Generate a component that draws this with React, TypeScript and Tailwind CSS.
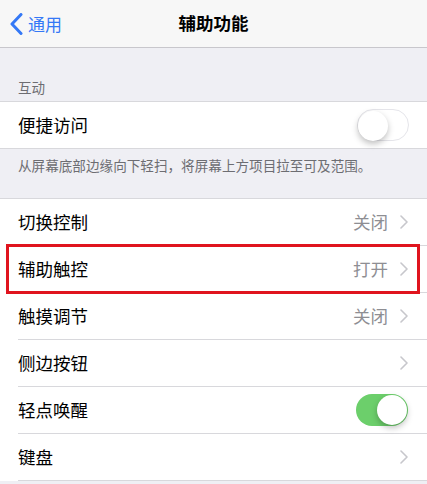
import React from "react";

const font = { fontFamily: '"Noto Sans CJK SC", "Noto Sans", sans-serif' };

function Chevron() {
  return (
    <svg width="8" height="14" viewBox="0 0 8 14" fill="none">
      <path d="M1 1l6 6-6 6" stroke="#c7c7cc" strokeWidth="1.6" strokeLinecap="round" strokeLinejoin="round" />
    </svg>
  );
}

function Toggle({ on }: { on: boolean }) {
  return (
    <div
      className={`relative w-[52px] h-[32px] rounded-full ${
        on ? "bg-[#6ccf6b]" : "bg-white border border-[#e5e5ea]"
      }`}
    >
      <div
        className={`absolute top-[1px] w-[30px] h-[30px] rounded-full bg-white shadow-[0_3px_6px_rgba(0,0,0,0.25)] ${
          on ? "right-[1px]" : "left-0 top-0"
        }`}
      />
    </div>
  );
}

type Row = { label: string; value?: string; toggle?: boolean; chevron?: boolean };

function ListRow({ label, value, toggle, chevron }: Row) {
  return (
    <div className="bg-white pl-[18px]">
      <div className="h-[47px] flex items-center justify-between pr-[19px] border-b border-[#d8d8dc]">
        <span className="text-[17.5px] text-black">{label}</span>
        <div className="flex items-center gap-[12px]">
          {value && <span className="text-[17.5px] text-[#8e8e93]">{value}</span>}
          {toggle !== undefined && <Toggle on={toggle} />}
          {chevron && <Chevron />}
        </div>
      </div>
    </div>
  );
}

export default function App() {
  const rows: Row[] = [
    { label: "切换控制", value: "关闭", chevron: true },
    { label: "辅助触控", value: "打开", chevron: true },
    { label: "触摸调节", value: "关闭", chevron: true },
    { label: "侧边按钮", chevron: true },
    { label: "轻点唤醒", toggle: true },
    { label: "键盘", chevron: true },
  ];

  return (
    <div className="relative w-[427px] h-[484px] overflow-hidden bg-[#efeff4]" style={font}>
      {/* Nav bar */}
      <div className="relative h-[48px] bg-[#f7f7f7] border-b border-[#c8c7cc] flex items-center justify-center">
        <div className="absolute left-[10px] top-0 h-full flex items-center gap-[5px]">
          <svg width="13" height="22" viewBox="0 0 13 22" fill="none">
            <path d="M11 1.5L2 11l9 9.5" stroke="#3478f6" strokeWidth="3" strokeLinecap="round" strokeLinejoin="round" />
          </svg>
          <span className="text-[17px] text-[#3478f6]">通用</span>
        </div>
        <span className="text-[17.5px] font-semibold text-black">辅助功能</span>
      </div>

      {/* Section header */}
      <div className="h-[54px] flex items-end px-[18px] pb-[5px] border-b border-[#d8d8dc]">
        <span className="text-[13.5px] leading-[18px] text-[#6d6d72]">互动</span>
      </div>

      <div className="bg-white h-[47px] flex items-center justify-between pl-[18px] pr-[18px] border-b border-[#d8d8dc]">
        <span className="text-[17.5px] text-black">便捷访问</span>
        <Toggle on={false} />
      </div>

      <div className="h-[50px] px-[18px] pt-[3px] border-b border-[#d8d8dc]">
        <span className="text-[13.6px] leading-[18px] text-[#6d6d72] whitespace-nowrap">
          从屏幕底部边缘向下轻扫，将屏幕上方项目拉至可及范围。
        </span>
      </div>

      {rows.map((r) => (
        <ListRow key={r.label} {...r} />
      ))}

      {/* Highlight box */}
      <div className="absolute left-[6px] top-[244px] w-[414px] h-[50px] border-[3px] border-[#e0141e] pointer-events-none" />
    </div>
  );
}
